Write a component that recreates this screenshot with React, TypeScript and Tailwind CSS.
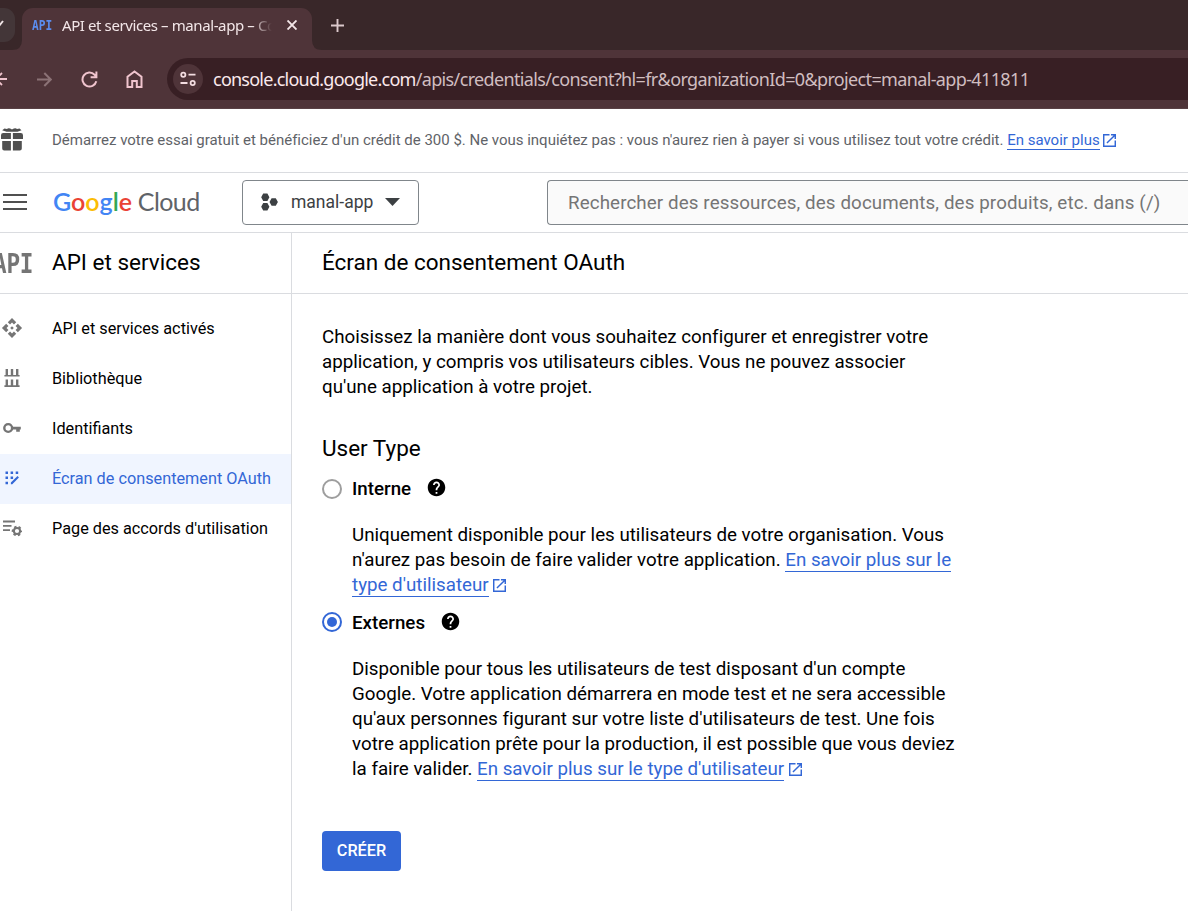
import React from "react";
import { MdApi, MdHelp } from "react-icons/md";

function OpenInNew({ className }: { className: string }) {
  return (
    <svg viewBox="3 3 18 18" className={className} fill="currentColor">
      <path d="M19 19H5V5h7V3H3v18h18v-9h-2v7zM14 3v2h3.59l-9.83 9.83 1.41 1.41L19 6.41V10h2V3h-7z" />
    </svg>
  );
}

function TabStrip() {
  return (
    <div className="flex h-[50px] bg-[#392729]">
      <div className="mt-2 flex h-[34px] w-[15px] items-center rounded-r-[11px] bg-[#433638]">
        <svg className="h-3 w-3" viewBox="0 0 12 12" fill="none" stroke="#f0e4e6" strokeWidth="2">
          <path d="M-3 4L-1 7L3 2" />
        </svg>
      </div>
      <svg className="mt-auto ml-[-3px] h-[10px] w-[10px]" viewBox="0 0 10 10" fill="#4f3439">
        <path d="M10 0V10H0Q10 10 10 0Z" />
      </svg>
      <div className="mt-2 flex h-[42px] w-[290px] rounded-t-[11px] bg-[#4f3439] pl-[10px]">
        <span className="mt-[8px] w-[22px] origin-left scale-x-[0.83] font-['DejaVu_Sans_Mono'] text-[13.5px] leading-[18px] font-bold text-[#5b8def]">
          API
        </span>
        <span className="mt-[7px] ml-[8px] w-[210px] overflow-hidden font-['Noto_Sans'] text-[15px] leading-5 tracking-[-0.4px] whitespace-nowrap text-[#f3e6e8] [mask-image:linear-gradient(to_right,#000_190px,transparent_210px)]">
          API et services – manal-app – Console
        </span>
        <svg className="mt-[12px] ml-[15px] h-[10px] w-[10px]" viewBox="0 0 10 10" stroke="#f3e6e8" strokeWidth="1.9">
          <path d="M0.5 0.5L9.5 9.5M9.5 0.5L0.5 9.5" />
        </svg>
      </div>
      <svg className="mt-auto h-[10px] w-[10px]" viewBox="0 0 10 10" fill="#4f3439">
        <path d="M0 0V10H10Q0 10 0 0Z" />
      </svg>
      <svg className="mt-[19px] ml-[9px] h-[13px] w-[13px]" viewBox="0 0 13 13" stroke="#dcc9cc" strokeWidth="1.9">
        <path d="M0 6.5H13M6.5 0V13" />
      </svg>
    </div>
  );
}

function Toolbar() {
  return (
    <div className="flex h-[59px] items-start border-b border-[#594145] bg-[#4f3439] pt-2">
      <div className="flex h-[42px] w-[167px] items-center text-[#f0c4ce]">
        <svg className="h-5 w-[8px]" viewBox="0 0 8 20" fill="none" stroke="currentColor" strokeWidth="1.8">
          <path d="M0 10H7M-4 10L2 4M-4 10L2 16" />
        </svg>
        <svg className="ml-[29px] h-[15px] w-[15px] text-[#8b7276]" viewBox="0 0 15 15" fill="none" stroke="currentColor" strokeWidth="2">
          <path d="M0 7.5H13.5M7.3 1L13.8 7.5L7.3 14" />
        </svg>
        <svg className="ml-[29px] h-[17px] w-[17px]" viewBox="0 0 17 17" fill="none" stroke="currentColor" strokeWidth="2">
          <path d="M15.3 10.2A7 7 0 1 1 13.6 3.7L15 5.2M15.4 0.5V6.3H9.6" />
        </svg>
        <svg className="ml-[28px] h-[18px] w-[17px]" viewBox="0 0 17 18" fill="none" stroke="currentColor" strokeWidth="2">
          <path d="M1.5 17V6.8L8.5 1.4L15.5 6.8V17H10.8V11H6.2V17Z" />
        </svg>
      </div>
      <div className="flex h-[42px] flex-1 items-center rounded-l-[21px] bg-[#381f24] pl-[6px]">
        <div className="flex h-[30px] w-[30px] items-center justify-center rounded-full bg-[#4f3439]">
          <svg className="h-4 w-4" viewBox="0 0 16 16" fill="none" stroke="#f3dde1" strokeWidth="1.8">
            <circle cx="3.3" cy="3.7" r="2.1" />
            <path d="M8.5 3.7H15.5M0.5 12H7.5" />
            <circle cx="12.7" cy="12" r="2.1" />
          </svg>
        </div>
        <span className="ml-[10px] font-['Noto_Sans'] text-[18px] leading-6 tracking-[-0.64px] whitespace-nowrap text-[#d0bdc0]">
          <span className="tracking-[-0.76px] text-[#fbe9ec]">console.cloud.google.com</span>
          /apis/credentials/consent?hl=fr&amp;organizationId=0&amp;project=manal-app-411811
        </span>
      </div>
    </div>
  );
}

function Banner() {
  return (
    <div className="flex h-[64px] items-center border-b border-[#dadce0] text-[15px] text-[#5f6368]">
      <svg className="mb-[3px] h-[24px] w-[24px] shrink-0" viewBox="0 0 24 24" fill="#505050">
        <path d="M1 8.2Q1 6 3.2 6H10.9V12H1ZM12.9 6H20.8Q23 6 23 8.2V12H12.9ZM2.2 14H10.9V23.5H4.2Q2.2 23.5 2.2 21.5ZM12.9 14H21.8V21.5Q21.8 23.5 19.8 23.5H12.9Z" />
        <path d="M2.2 3.2L4.5 1.6L7 2Q8.5 0 12 2.6Q15.5 0 17 2L19.5 1.6L21.5 3.2L17.5 4.7H6.5Z" />
      </svg>
      <span className="ml-[28px] tracking-[-0.009px] whitespace-nowrap">
        Démarrez votre essai gratuit et bénéficiez d'un crédit de 300 $. Ne vous inquiétez pas : vous n'aurez rien à payer si vous utilisez tout votre crédit.{" "}
        <a className="border-b border-[#3367d6] text-[#3367d6]">En savoir plus</a>
      </span>
      <OpenInNew className="ml-[3px] h-[13px] w-[13px] text-[#3367d6]" />
    </div>
  );
}

function Header() {
  return (
    <div className="flex h-[60px] items-center border-b border-[#dadce0]">
      <div className="mb-[2px] ml-[3px] flex h-4 w-6 flex-col justify-between">
        <div className="h-[2px] bg-[#505050]" />
        <div className="h-[2px] bg-[#505050]" />
        <div className="h-[2px] bg-[#505050]" />
      </div>
      <div className="mb-[3px] ml-[26px] w-[189px] font-['Lato'] text-[25px] leading-8 tracking-[-0.6px] whitespace-nowrap text-[#5f6368]">
        <span className="font-semibold tracking-[0px]">
          <span className="text-[#4285f4]">G</span>
          <span className="text-[#ea4335]">o</span>
          <span className="text-[#fbbc04]">o</span>
          <span className="text-[#4285f4]">g</span>
          <span className="text-[#34a853]">l</span>
          <span className="text-[#ea4335]">e</span>
        </span>
        <span> Cloud</span>
      </div>
      <div className="flex h-[45px] w-[177px] items-center rounded-[4px] border border-[#80868b] pl-[18px] text-[#3c4043]">
        <svg className="mb-[2px] h-[18px] w-[17px]" viewBox="0 0 17 18" fill="currentColor">
          <path d="M2.2 0.5H6.4L8.4 4.3L6.4 8H2.2L0.2 4.3ZM2.2 10H6.4L8.4 13.8L6.4 17.5H2.2L0.2 13.8ZM10.6 5.3H14.8L16.9 9L14.8 12.8H10.6L8.5 9Z" />
        </svg>
        <span className="ml-[13px] w-[82px] text-[17.5px] whitespace-nowrap">manal-app</span>
        <svg className="mb-[1px] ml-[12px] h-2 w-[15px]" viewBox="0 0 15 8" fill="currentColor">
          <path d="M0 0H15L7.5 8Z" />
        </svg>
      </div>
      <div className="ml-[128px] flex h-[45px] flex-1 items-center rounded-l-[4px] border border-r-0 border-[#80868b] bg-[#fafafa] pt-[2px] pl-5 text-[18.75px] tracking-[0.11px] whitespace-nowrap text-[#757575]">
        Rechercher des ressources, des documents, des produits, etc. dans (/)
      </div>
    </div>
  );
}

function LibraryIcon() {
  return (
    <svg className="h-[18px] w-[16px]" viewBox="0 0 16 18" fill="currentColor">
      <path d="M1.6 0H4V6H6.8V0H9.2V6H12V0H14.4V6H15.6V7.6H0.4V6H1.6ZM1.6 10.4H4V16.2H6.8V10.4H9.2V16.2H12V10.4H14.4V16.2H15.6V17.9H0.4V16.2H1.6Z" />
    </svg>
  );
}

function KeyIcon() {
  return (
    <svg className="h-[12px] w-[18px]" viewBox="0 0 18 12">
      <circle cx="5.2" cy="6" r="3.9" fill="none" stroke="currentColor" strokeWidth="2.4" />
      <path d="M9 4.8H17.8V7.4H16.8V9.8H13.2V7.4H9Z" fill="currentColor" />
    </svg>
  );
}

function ConsentIcon() {
  return (
    <svg className="h-[14px] w-[14px]" viewBox="0 0 14 14" fill="currentColor">
      <path d="M0.5 0.5H3V3H0.5ZM5.6 0.5H8.1V3H5.6ZM10.7 0.5H13.2V3H10.7ZM0.5 5.6H3V8.1H0.5ZM5.6 5.6H8.1V8.1H5.6ZM0.5 10.7H3V13.2H0.5Z" />
      <path d="M5.9 13.3V11.6L12.5 5L13.9 6.4L7.3 13.3Z" />
    </svg>
  );
}

function AgreementIcon() {
  return (
    <svg className="h-[17px] w-[20px]" viewBox="0 0 20 17">
      <path d="M1 1.5H13M1 5.8H9.5M1 10.1H8" stroke="currentColor" strokeWidth="1.8" />
      <circle cx="15" cy="11" r="3.1" fill="none" stroke="currentColor" strokeWidth="2" />
      <circle cx="15" cy="11" r="4.4" fill="none" stroke="currentColor" strokeWidth="1.8" strokeDasharray="2.4 2.208" strokeDashoffset="1.2" />
    </svg>
  );
}

function NavItem({ icon, label, active = false }: { icon: React.ReactNode; label: string; active?: boolean }) {
  return (
    <div className={active ? "flex h-[50px] items-center bg-[#f0f5ff] text-[#3367d6]" : "flex h-[50px] items-center text-[#757575]"}>
      <div className="mb-[2px] flex w-[24px] justify-center">{icon}</div>
      <span className={active ? "ml-[28px] text-[16.25px] whitespace-nowrap" : "ml-[28px] text-[16.25px] whitespace-nowrap text-black"}>
        {label}
      </span>
    </div>
  );
}

function Sidebar() {
  return (
    <aside className="w-[292px] border-r border-[#dadce0]">
      <div className="flex h-[61px] items-center border-b border-[#dadce0]">
        <span className="ml-[-7px] w-[59px] origin-left scale-x-[0.84] font-['DejaVu_Sans_Mono'] text-[27px] leading-none font-bold tracking-[-0.3px] text-[#757575]">
          API
        </span>
        <span className="mb-[1px] text-[22.5px] text-black">API et services</span>
      </div>
      <nav className="pt-[10px]">
        <NavItem icon={<MdApi className="h-[22px] w-[22px]" />} label="API et services activés" />
        <NavItem icon={<LibraryIcon />} label="Bibliothèque" />
        <NavItem icon={<KeyIcon />} label="Identifiants" />
        <NavItem active icon={<ConsentIcon />} label="Écran de consentement OAuth" />
        <NavItem icon={<AgreementIcon />} label="Page des accords d'utilisation" />
      </nav>
    </aside>
  );
}

function Radio({ checked = false }: { checked?: boolean }) {
  return (
    <div className={checked ? "flex h-5 w-5 items-center justify-center rounded-full border-2 border-[#3367d6]" : "h-5 w-5 rounded-full border-2 border-[#9e9e9e]"}>
      {checked && <div className="h-[10px] w-[10px] rounded-full bg-[#3367d6]" />}
    </div>
  );
}

function Link({ children }: { children: React.ReactNode }) {
  return <a className="border-b border-[#3367d6] text-[#3367d6]">{children}</a>;
}

function Content() {
  return (
    <main className="flex-1 text-[18.75px] leading-[25px] tracking-[-0.005px] whitespace-nowrap text-black">
      <div className="flex h-[61px] items-center border-b border-[#dadce0] pl-[30px]">
        <h1 className="mb-[2px] text-[22.5px]">Écran de consentement OAuth</h1>
      </div>
      <div className="pl-[30px]">
        <p className="pt-[31px]">
          Choisissez la manière dont vous souhaitez configurer et enregistrer votre
          <br />
          application, y compris vos utilisateurs cibles. Vous ne pouvez associer
          <br />
          qu'une application à votre projet.
        </p>
        <h2 className="mt-[36px] text-[22.5px] leading-[25px]">User Type</h2>
        <div className="mt-[16px] flex h-[25px] items-center">
          <div className="mb-[1px]">
            <Radio />
          </div>
          <span className="ml-[10px] w-[74px] font-medium">Interne</span>
          <MdHelp className="mb-[4px] h-[21px] w-[21px]" />
        </div>
        <p className="mt-[21px] pl-[30px]">
          Uniquement disponible pour les utilisateurs de votre organisation. Vous
          <br />
          n'aurez pas besoin de faire valider votre application. <Link>En savoir plus sur le</Link>
          <br />
          <Link>type d'utilisateur</Link>
          <OpenInNew className="ml-[4px] inline h-[13px] w-[13px] align-[-1px] text-[#3367d6]" />
        </p>
        <div className="mt-[13px] flex h-[25px] items-center">
          <div className="mb-[3px]">
            <Radio checked />
          </div>
          <span className="ml-[10px] w-[88px] font-medium">Externes</span>
          <MdHelp className="mb-[4px] h-[21px] w-[21px]" />
        </div>
        <p className="mt-[21px] pl-[30px]">
          Disponible pour tous les utilisateurs de test disposant d'un compte
          <br />
          Google. Votre application démarrera en mode test et ne sera accessible
          <br />
          qu'aux personnes figurant sur votre liste d'utilisateurs de test. Une fois
          <br />
          votre application prête pour la production, il est possible que vous deviez
          <br />
          la faire valider. <Link>En savoir plus sur le type d'utilisateur</Link>
          <OpenInNew className="ml-[5px] inline h-[13px] w-[13px] align-[-1px] text-[#3367d6]" />
        </p>
        <button className="mt-[49px] flex h-10 w-[79px] items-center justify-center rounded-[4px] bg-[#3367d6] pb-[1px] text-[16.25px] font-medium text-white">
          CRÉER
        </button>
      </div>
    </main>
  );
}

export default function App() {
  return (
    <div className="flex h-[911px] w-[1188px] flex-col overflow-hidden bg-white font-['Roboto',sans-serif]">
      <TabStrip />
      <Toolbar />
      <Banner />
      <Header />
      <div className="flex flex-1">
        <Sidebar />
        <Content />
      </div>
    </div>
  );
}
